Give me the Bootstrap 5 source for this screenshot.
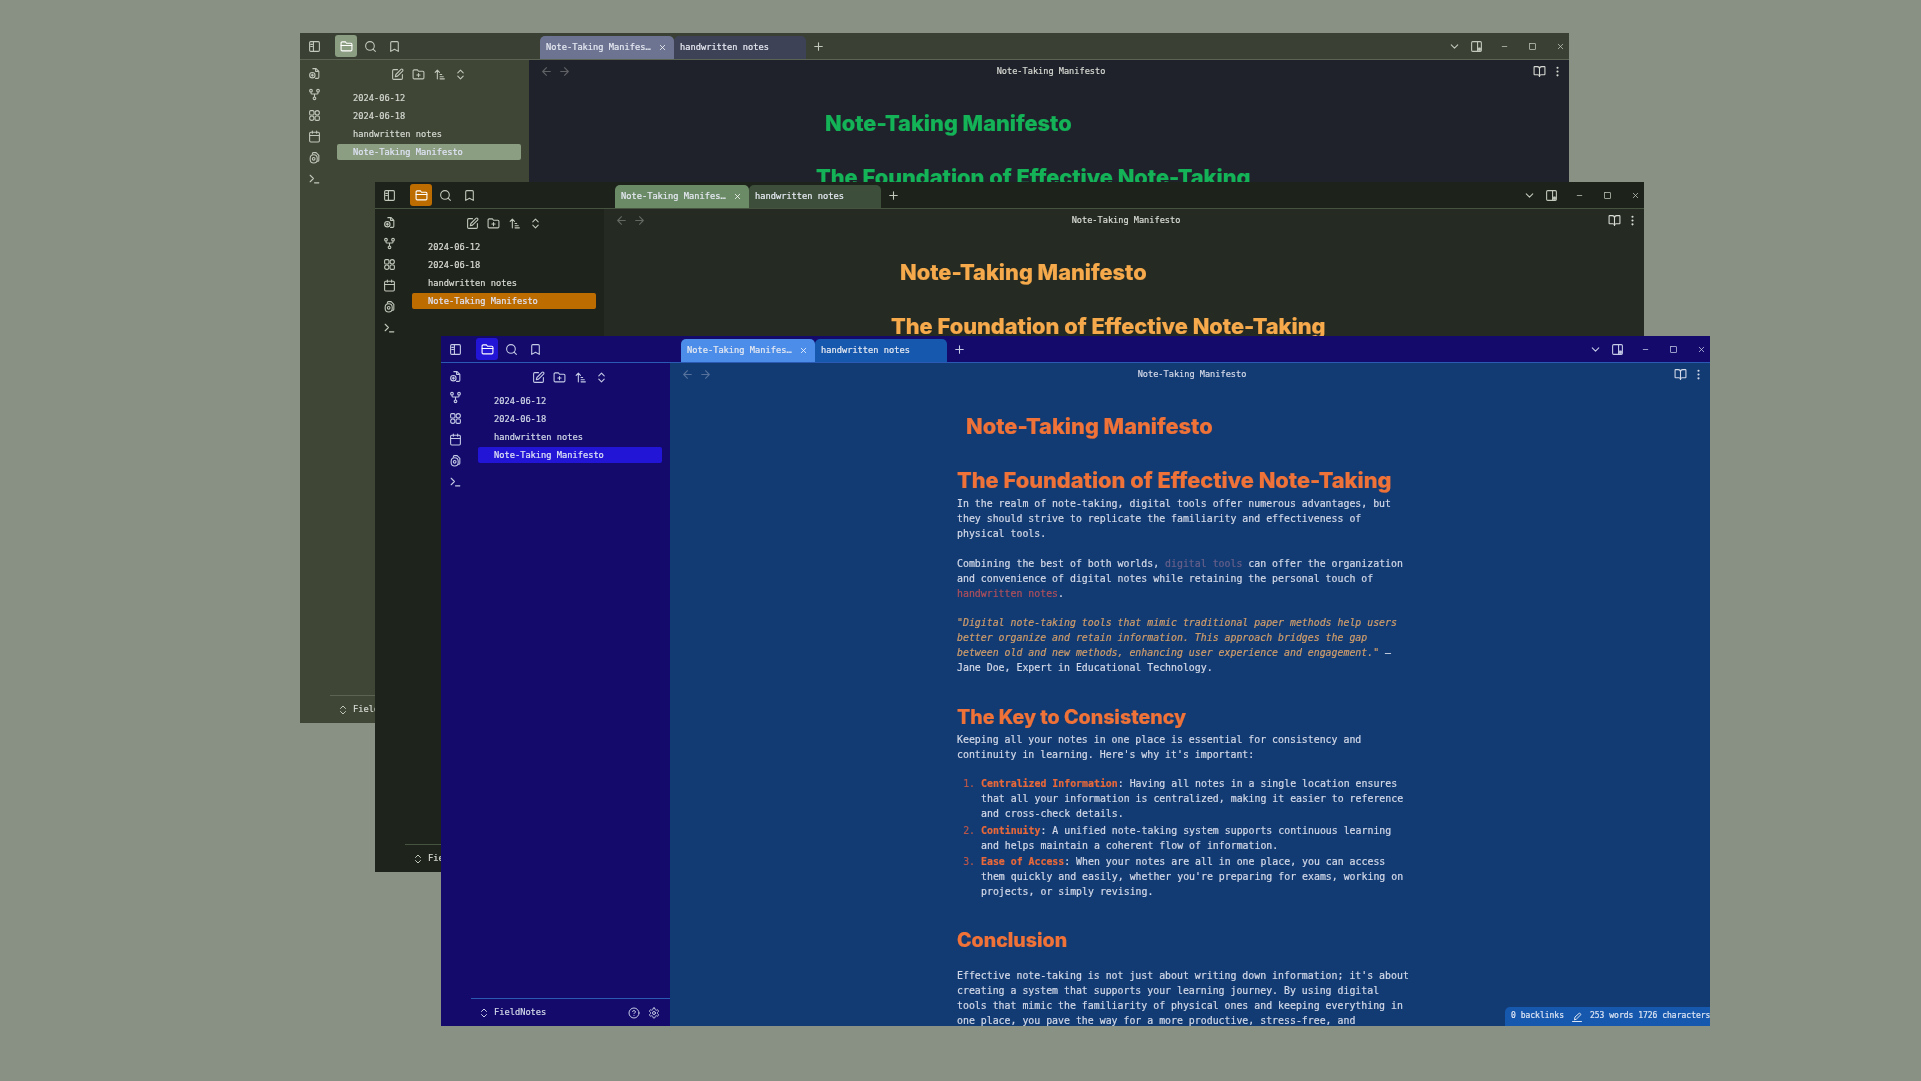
<!DOCTYPE html>
<html lang="en">
<head>
    <meta charset="UTF-8">
    <meta name="viewport" content="width=device-width, initial-scale=1.0">
    <title>Note-Taking Manifesto</title>
    <link href="https://cdn.jsdelivr.net/npm/bootstrap@5.3.0/dist/css/bootstrap.min.css" rel="stylesheet">
    <style>
        html, body { height: 100%; }
        body { background: #899084; overflow: hidden; }
        .desk { position: relative; width: 1921px; height: 1081px; background: #899084; filter: blur(.75px); }
        .app-win { position: absolute; width: 1269px; height: 690px; color: var(--ink); font: 9.9px/14.9px "DejaVu Sans Mono", "Liberation Mono", monospace; -webkit-text-stroke: .2px; overflow: hidden; }
        .win-a { left: 300px; top: 33px; }
        .win-b { left: 375px; top: 182px; }
        .win-c { left: 441px; top: 336px; }
        .th-moss { --bar: #3a4033; --side: #3f4636; --pane: #20222b; --line: #5b6352; --tab: #6c7491; --tab2: #3e4256; --pick: #8c9e82; --head: #14b358; --ink: #d6d9d2; --icon: #c3c8bc; }
        .th-forest { --bar: #1d221a; --side: #1e231b; --pane: #252b22; --line: #46533f; --tab: #6b8b67; --tab2: #3d4f3a; --pick: #bd6c00; --head: #f7aa4c; --ink: #d9dcd5; --icon: #c3c8bc; }
        .th-indigo { --bar: #130a6b; --side: #130a6b; --pane: #123a73; --line: #2a5ab4; --tab: #4b8de8; --tab2: #1558ad; --pick: #2315d6; --head: #ef7238; --ink: #d3d9e8; --icon: #c6cbe6; }

        .ico { width: 13px; height: 13px; fill: none; stroke: currentColor; stroke-width: 2; stroke-linecap: round; stroke-linejoin: round; flex: none; }
        .top-bar { height: 27px; background: var(--bar); border-bottom: 1px solid var(--line); color: var(--icon); }
        .top-left { width: 240px; padding-left: 3.5px; }
        .top-btn { width: 22px; height: 22px; border-radius: 3px; margin-right: 2px; }
        .top-btn.first { margin-right: 9.5px; }
        .top-btn.picked { background: var(--pick); color: #fff; }
        .file-tab { height: 23px; margin-top: 3px; padding: 0 6px; font-size: 8.7px; white-space: nowrap; border-radius: 5px 5px 0 0; color: #e6e9f2; }
        .file-tab.on { width: 134px; background: var(--tab); }
        .file-tab.off { width: 132px; background: var(--tab2); }
        .file-tab .ico { width: 9px; height: 9px; margin-left: auto; margin-right: 1px; color: #fff; }
        .add-tab { margin-left: 6px; }
        .win-tools { gap: 8px; margin-right: -1px; }
        .win-tool { width: 20px; }
        .win-tool .ico.thin { width: 9px; height: 9px; }
        .win-tool.narrow { margin-right: -6px; }

        .rib { width: 30px; padding-top: 7px; padding-right: .5px; gap: 8px; background: var(--side); color: var(--icon); }
        .side { width: 199px; background: var(--side); }
        .side-tools { height: 28.5px; gap: 8px; padding-right: 2px; color: var(--icon); }
        .tree-row { height: 18px; margin: 0 8px 0 7px; padding-left: 16px; line-height: 18px; font-size: 8.7px; white-space: nowrap; }
        .tree-row.picked { background: var(--pick); height: 16px; margin-top: 1px; margin-bottom: 1px; line-height: 16px; border-radius: 2px; color: #dfe3f5; }
        .side-foot { height: 28px; border-top: 1px solid var(--line); padding: 0 10px 0 7px; color: var(--icon); font-size: 8.7px; }
        .side-foot .name { margin-left: 4px; color: var(--ink); }
        .side-foot .ico.small { width: 12px; height: 12px; }

        .pane { background: var(--pane); min-width: 0; }
        .pane-head { height: 23px; padding: 0 5px 0 11px; color: var(--ink); font-size: 8.6px; }
        .pane-head .dim { gap: 5px; opacity: .35; }
        .pane-head .right-set { gap: 5px; }
        .pane-title { left: 0; right: 0; padding-left: 4px; text-align: center; }
        .note { width: 466px; margin: 0 auto; padding: 25px 10px 0 0; }
        .note h1, .note h2 { color: var(--head); font-family: Inter, "Open Sans", sans-serif; font-weight: 800; margin: 0; white-space: nowrap; }
        .note h1 { font-size: 21.8px; line-height: 30px; margin: 0 0 25px 9px; }
        .note h2 { font-size: 21.8px; line-height: 28px; margin: 0 0 3.2px; }
        .note h2.sub { font-size: 19.6px; margin-top: 26.8px; margin-bottom: 2px; }
        .note p { margin: 0 0 14.8px; }
        .note ol { padding-left: 24px; margin: 0; }
        .note li { margin-bottom: 1.7px; }
        .note li::marker { color: #b8574a; }
        .note b { color: #e9693a; }
        .link-dim { color: #67608a; }
        .link-red { color: #b0505c; }
        .quote-txt { color: #cf9d6b; font-style: italic; }
        .note h2.last { margin-top: 26.5px; margin-bottom: 15px; }

        .status-chip { position: absolute; right: 0; bottom: 0; width: 205px; height: 19px; padding-left: 6px; gap: 7px; background: var(--tab2); border-radius: 5px 0 0 0; font-size: 8px; white-space: nowrap; overflow: hidden; color: #dde4f3; }
        .status-chip .ico { width: 12px; height: 12px; }
    </style>
</head>
<body>
    <svg width="0" height="0" class="position-absolute">
        <symbol id="i-panel" viewBox="0 0 24 24"><rect x="3" y="3" width="18" height="18" rx="2"/><path d="M10 3v18M5 8h3M5 12h3"/></symbol>
        <symbol id="i-panel-r" viewBox="0 0 24 24"><rect x="3" y="3" width="18" height="18" rx="2"/><path d="M14 3v18"/><path d="M16 15h3v4h-3z" fill="currentColor"/></symbol>
        <symbol id="i-folder" viewBox="0 0 24 24"><path d="M4 20h16a2 2 0 0 0 2-2V8a2 2 0 0 0-2-2h-8L10 3.5H4a2 2 0 0 0-2 2V18a2 2 0 0 0 2 2z"/><path d="M2 10h20"/></symbol>
        <symbol id="i-search" viewBox="0 0 24 24"><circle cx="11" cy="11" r="8"/><path d="m21 21-4.3-4.3"/></symbol>
        <symbol id="i-mark" viewBox="0 0 24 24"><path d="m19 21-7-4-7 4V5a2 2 0 0 1 2-2h10a2 2 0 0 1 2 2z"/></symbol>
        <symbol id="i-file" viewBox="0 0 24 24"><path d="M9 3h6l5 5v11a2 2 0 0 1-2 2h-4"/><path d="M14 3v5h5"/><circle cx="8" cy="15" r="5"/><path d="M8 13v4M6 15h4"/></symbol>
        <symbol id="i-fork" viewBox="0 0 24 24"><circle cx="12" cy="19" r="2.5"/><circle cx="5.500" cy="5" r="2.5"/><circle cx="18.500" cy="5" r="2.5"/><path d="M18.500 8v1a2 2 0 0 1-2 2h-9a2 2 0 0 1-2-2V8M12 11v5"/></symbol>
        <symbol id="i-grid" viewBox="0 0 24 24"><rect x="3" y="3" width="8" height="8" rx="2"/><rect x="13" y="3" width="8" height="8" rx="4"/><circle cx="7" cy="17" r="4"/><rect x="13" y="13" width="8" height="8" rx="2"/></symbol>
        <symbol id="i-cal" viewBox="0 0 24 24"><rect x="3" y="4" width="18" height="18" rx="2"/><path d="M16 2v4M8 2v4M3 10h18"/></symbol>
        <symbol id="i-copy" viewBox="0 0 24 24"><path d="M8 6V5a2 2 0 0 1 2-2h5l5 5v9a2 2 0 0 1-2 2h-1"/><rect x="4" y="7" width="13" height="15" rx="6.500"/><circle cx="10.500" cy="14.500" r="2.500"/></symbol>
        <symbol id="i-term" viewBox="0 0 24 24"><path d="m4 6 6 6-6 6M12 20h8"/></symbol>
        <symbol id="i-pen" viewBox="0 0 24 24"><path d="M12 3H5a2 2 0 0 0-2 2v14a2 2 0 0 0 2 2h14a2 2 0 0 0 2-2v-7"/><path d="M18.400 2.600a2.100 2.100 0 1 1 3 3L12 15l-4 1 1-4z"/></symbol>
        <symbol id="i-newdir" viewBox="0 0 24 24"><path d="M4 20h16a2 2 0 0 0 2-2V8a2 2 0 0 0-2-2h-8L10 3.500H4a2 2 0 0 0-2 2V18a2 2 0 0 0 2 2z"/><path d="M12 10v6M9 13h6"/></symbol>
        <symbol id="i-sort" viewBox="0 0 24 24"><path d="m4 8 4-4 4 4M8 4v16M13 20h8M13 16h6M13 12h3"/></symbol>
        <symbol id="i-updown" viewBox="0 0 24 24"><path d="m7 15 5 5 5-5M7 9l5-5 5 5"/></symbol>
        <symbol id="i-down" viewBox="0 0 24 24"><path d="m6 9 6 6 6-6"/></symbol>
        <symbol id="i-min" viewBox="0 0 24 24"><path d="M6 12h12"/></symbol>
        <symbol id="i-max" viewBox="0 0 24 24"><rect x="4" y="4" width="16" height="16" rx="1"/></symbol>
        <symbol id="i-x" viewBox="0 0 24 24"><path d="M18 6 6 18M6 6l12 12"/></symbol>
        <symbol id="i-plus" viewBox="0 0 24 24"><path d="M5 12h14M12 5v14"/></symbol>
        <symbol id="i-back" viewBox="0 0 24 24"><path d="m12 19-7-7 7-7M19 12H5"/></symbol>
        <symbol id="i-next" viewBox="0 0 24 24"><path d="m12 5 7 7-7 7M5 12h14"/></symbol>
        <symbol id="i-book" viewBox="0 0 24 24"><path d="M12 7v14"/><path d="M3 18a1 1 0 0 1-1-1V4a1 1 0 0 1 1-1h5a4 4 0 0 1 4 4 4 4 0 0 1 4-4h5a1 1 0 0 1 1 1v13a1 1 0 0 1-1 1h-6a3 3 0 0 0-3 3 3 3 0 0 0-3-3z"/></symbol>
        <symbol id="i-dots" viewBox="0 0 24 24"><circle cx="12" cy="5" r="1"/><circle cx="12" cy="12" r="1"/><circle cx="12" cy="19" r="1"/></symbol>
        <symbol id="i-help" viewBox="0 0 24 24"><circle cx="12" cy="12" r="10"/><path d="M9.100 9a3 3 0 0 1 5.800 1c0 2-3 3-3 3M12 17h.01"/></symbol>
        <symbol id="i-gear" viewBox="0 0 24 24"><path d="M12.220 2h-.44a2 2 0 0 0-2 2v.18a2 2 0 0 1-1 1.730l-.43.250a2 2 0 0 1-2 0l-.15-.08a2 2 0 0 0-2.730.730l-.22.380a2 2 0 0 0 .730 2.730l.15.100a2 2 0 0 1 1 1.720v.510a2 2 0 0 1-1 1.740l-.15.090a2 2 0 0 0-.730 2.730l.22.380a2 2 0 0 0 2.730.730l.15-.08a2 2 0 0 1 2 0l.43.250a2 2 0 0 1 1 1.730V20a2 2 0 0 0 2 2h.44a2 2 0 0 0 2-2v-.18a2 2 0 0 1 1-1.730l.43-.25a2 2 0 0 1 2 0l.15.080a2 2 0 0 0 2.730-.73l.22-.39a2 2 0 0 0-.73-2.730l-.15-.08a2 2 0 0 1-1-1.740v-.5a2 2 0 0 1 1-1.740l.15-.09a2 2 0 0 0 .73-2.730l-.22-.38a2 2 0 0 0-2.730-.73l-.15.080a2 2 0 0 1-2 0l-.43-.25a2 2 0 0 1-1-1.730V4a2 2 0 0 0-2-2z"/><circle cx="12" cy="12" r="3"/></symbol>
        <symbol id="i-quill" viewBox="0 0 24 24"><path d="M3 21h18M7 17l1-5L17 4l3 3-9 9z"/></symbol>
    </svg>

    <div class="desk">

        <!-- back window: green on moss -->
        <div class="app-win win-a th-moss d-flex flex-column">
            <div class="top-bar d-flex align-items-center flex-shrink-0">
                <div class="top-left d-flex align-items-center">
                    <span class="top-btn first d-flex align-items-center justify-content-center"><svg class="ico"><use href="#i-panel"/></svg></span>
                    <span class="top-btn picked d-flex align-items-center justify-content-center"><svg class="ico"><use href="#i-folder"/></svg></span>
                    <span class="top-btn d-flex align-items-center justify-content-center"><svg class="ico"><use href="#i-search"/></svg></span>
                    <span class="top-btn d-flex align-items-center justify-content-center"><svg class="ico"><use href="#i-mark"/></svg></span>
                </div>
                <div class="file-tab on d-flex align-items-center">Note-Taking Manifes… <svg class="ico"><use href="#i-x"/></svg></div>
                <div class="file-tab off d-flex align-items-center">handwritten notes</div>
                <svg class="ico add-tab"><use href="#i-plus"/></svg>
                <div class="win-tools d-flex align-items-center ms-auto">
                    <span class="win-tool narrow d-flex justify-content-center"><svg class="ico"><use href="#i-down"/></svg></span>
                    <span class="win-tool d-flex justify-content-center"><svg class="ico"><use href="#i-panel-r"/></svg></span>
                    <span class="win-tool d-flex justify-content-center"><svg class="ico thin"><use href="#i-min"/></svg></span>
                    <span class="win-tool d-flex justify-content-center"><svg class="ico thin"><use href="#i-max"/></svg></span>
                    <span class="win-tool d-flex justify-content-center"><svg class="ico thin"><use href="#i-x"/></svg></span>
                </div>
            </div>
            <div class="d-flex flex-grow-1 overflow-hidden">
                <div class="rib d-flex flex-column align-items-center flex-shrink-0">
                    <svg class="ico"><use href="#i-file"/></svg><svg class="ico"><use href="#i-fork"/></svg><svg class="ico"><use href="#i-grid"/></svg><svg class="ico"><use href="#i-cal"/></svg><svg class="ico"><use href="#i-copy"/></svg><svg class="ico"><use href="#i-term"/></svg>
                </div>
                <div class="side d-flex flex-column flex-shrink-0">
                    <div class="side-tools d-flex align-items-center justify-content-center">
                        <svg class="ico"><use href="#i-pen"/></svg><svg class="ico"><use href="#i-newdir"/></svg><svg class="ico"><use href="#i-sort"/></svg><svg class="ico"><use href="#i-updown"/></svg>
                    </div>
                    <div class="tree-row">2024-06-12</div>
                    <div class="tree-row">2024-06-18</div>
                    <div class="tree-row">handwritten notes</div>
                    <div class="tree-row picked">Note-Taking Manifesto</div>
                    <div class="side-foot d-flex align-items-center mt-auto">
                        <svg class="ico small"><use href="#i-updown"/></svg><span class="name">FieldNotes</span>
                    </div>
                </div>
                <div class="pane flex-grow-1 d-flex flex-column overflow-hidden">
                    <div class="pane-head position-relative d-flex align-items-center flex-shrink-0">
                        <span class="dim d-flex"><svg class="ico"><use href="#i-back"/></svg><svg class="ico"><use href="#i-next"/></svg></span>
                        <span class="pane-title position-absolute">Note-Taking Manifesto</span>
                        <span class="right-set ms-auto d-flex"><svg class="ico"><use href="#i-book"/></svg><svg class="ico"><use href="#i-dots"/></svg></span>
                    </div>
                    <div class="note">
                        <h1>Note-Taking Manifesto</h1>
                        <h2>The Foundation of Effective Note-Taking</h2>
                    </div>
                </div>
            </div>
        </div>

        <!-- middle window: orange on forest -->
        <div class="app-win win-b th-forest d-flex flex-column">
            <div class="top-bar d-flex align-items-center flex-shrink-0">
                <div class="top-left d-flex align-items-center">
                    <span class="top-btn first d-flex align-items-center justify-content-center"><svg class="ico"><use href="#i-panel"/></svg></span>
                    <span class="top-btn picked d-flex align-items-center justify-content-center"><svg class="ico"><use href="#i-folder"/></svg></span>
                    <span class="top-btn d-flex align-items-center justify-content-center"><svg class="ico"><use href="#i-search"/></svg></span>
                    <span class="top-btn d-flex align-items-center justify-content-center"><svg class="ico"><use href="#i-mark"/></svg></span>
                </div>
                <div class="file-tab on d-flex align-items-center">Note-Taking Manifes… <svg class="ico"><use href="#i-x"/></svg></div>
                <div class="file-tab off d-flex align-items-center">handwritten notes</div>
                <svg class="ico add-tab"><use href="#i-plus"/></svg>
                <div class="win-tools d-flex align-items-center ms-auto">
                    <span class="win-tool narrow d-flex justify-content-center"><svg class="ico"><use href="#i-down"/></svg></span>
                    <span class="win-tool d-flex justify-content-center"><svg class="ico"><use href="#i-panel-r"/></svg></span>
                    <span class="win-tool d-flex justify-content-center"><svg class="ico thin"><use href="#i-min"/></svg></span>
                    <span class="win-tool d-flex justify-content-center"><svg class="ico thin"><use href="#i-max"/></svg></span>
                    <span class="win-tool d-flex justify-content-center"><svg class="ico thin"><use href="#i-x"/></svg></span>
                </div>
            </div>
            <div class="d-flex flex-grow-1 overflow-hidden">
                <div class="rib d-flex flex-column align-items-center flex-shrink-0">
                    <svg class="ico"><use href="#i-file"/></svg><svg class="ico"><use href="#i-fork"/></svg><svg class="ico"><use href="#i-grid"/></svg><svg class="ico"><use href="#i-cal"/></svg><svg class="ico"><use href="#i-copy"/></svg><svg class="ico"><use href="#i-term"/></svg>
                </div>
                <div class="side d-flex flex-column flex-shrink-0">
                    <div class="side-tools d-flex align-items-center justify-content-center">
                        <svg class="ico"><use href="#i-pen"/></svg><svg class="ico"><use href="#i-newdir"/></svg><svg class="ico"><use href="#i-sort"/></svg><svg class="ico"><use href="#i-updown"/></svg>
                    </div>
                    <div class="tree-row">2024-06-12</div>
                    <div class="tree-row">2024-06-18</div>
                    <div class="tree-row">handwritten notes</div>
                    <div class="tree-row picked">Note-Taking Manifesto</div>
                    <div class="side-foot d-flex align-items-center mt-auto">
                        <svg class="ico small"><use href="#i-updown"/></svg><span class="name">FieldNotes</span>
                    </div>
                </div>
                <div class="pane flex-grow-1 d-flex flex-column overflow-hidden">
                    <div class="pane-head position-relative d-flex align-items-center flex-shrink-0">
                        <span class="dim d-flex"><svg class="ico"><use href="#i-back"/></svg><svg class="ico"><use href="#i-next"/></svg></span>
                        <span class="pane-title position-absolute">Note-Taking Manifesto</span>
                        <span class="right-set ms-auto d-flex"><svg class="ico"><use href="#i-book"/></svg><svg class="ico"><use href="#i-dots"/></svg></span>
                    </div>
                    <div class="note">
                        <h1>Note-Taking Manifesto</h1>
                        <h2>The Foundation of Effective Note-Taking</h2>
                    </div>
                </div>
            </div>
        </div>

        <!-- front window: orange on indigo -->
        <div class="app-win win-c th-indigo d-flex flex-column">
            <div class="top-bar d-flex align-items-center flex-shrink-0">
                <div class="top-left d-flex align-items-center">
                    <span class="top-btn first d-flex align-items-center justify-content-center"><svg class="ico"><use href="#i-panel"/></svg></span>
                    <span class="top-btn picked d-flex align-items-center justify-content-center"><svg class="ico"><use href="#i-folder"/></svg></span>
                    <span class="top-btn d-flex align-items-center justify-content-center"><svg class="ico"><use href="#i-search"/></svg></span>
                    <span class="top-btn d-flex align-items-center justify-content-center"><svg class="ico"><use href="#i-mark"/></svg></span>
                </div>
                <div class="file-tab on d-flex align-items-center">Note-Taking Manifes… <svg class="ico"><use href="#i-x"/></svg></div>
                <div class="file-tab off d-flex align-items-center">handwritten notes</div>
                <svg class="ico add-tab"><use href="#i-plus"/></svg>
                <div class="win-tools d-flex align-items-center ms-auto">
                    <span class="win-tool narrow d-flex justify-content-center"><svg class="ico"><use href="#i-down"/></svg></span>
                    <span class="win-tool d-flex justify-content-center"><svg class="ico"><use href="#i-panel-r"/></svg></span>
                    <span class="win-tool d-flex justify-content-center"><svg class="ico thin"><use href="#i-min"/></svg></span>
                    <span class="win-tool d-flex justify-content-center"><svg class="ico thin"><use href="#i-max"/></svg></span>
                    <span class="win-tool d-flex justify-content-center"><svg class="ico thin"><use href="#i-x"/></svg></span>
                </div>
            </div>
            <div class="d-flex flex-grow-1 overflow-hidden">
                <div class="rib d-flex flex-column align-items-center flex-shrink-0">
                    <svg class="ico"><use href="#i-file"/></svg><svg class="ico"><use href="#i-fork"/></svg><svg class="ico"><use href="#i-grid"/></svg><svg class="ico"><use href="#i-cal"/></svg><svg class="ico"><use href="#i-copy"/></svg><svg class="ico"><use href="#i-term"/></svg>
                </div>
                <div class="side d-flex flex-column flex-shrink-0">
                    <div class="side-tools d-flex align-items-center justify-content-center">
                        <svg class="ico"><use href="#i-pen"/></svg><svg class="ico"><use href="#i-newdir"/></svg><svg class="ico"><use href="#i-sort"/></svg><svg class="ico"><use href="#i-updown"/></svg>
                    </div>
                    <div class="tree-row">2024-06-12</div>
                    <div class="tree-row">2024-06-18</div>
                    <div class="tree-row">handwritten notes</div>
                    <div class="tree-row picked">Note-Taking Manifesto</div>
                    <div class="side-foot d-flex align-items-center mt-auto">
                        <svg class="ico small"><use href="#i-updown"/></svg><span class="name">FieldNotes</span>
                        <span class="ms-auto d-flex gap-2"><svg class="ico small"><use href="#i-help"/></svg><svg class="ico small"><use href="#i-gear"/></svg></span>
                    </div>
                </div>
                <div class="pane flex-grow-1 d-flex flex-column overflow-hidden position-relative">
                    <div class="pane-head position-relative d-flex align-items-center flex-shrink-0">
                        <span class="dim d-flex"><svg class="ico"><use href="#i-back"/></svg><svg class="ico"><use href="#i-next"/></svg></span>
                        <span class="pane-title position-absolute">Note-Taking Manifesto</span>
                        <span class="right-set ms-auto d-flex"><svg class="ico"><use href="#i-book"/></svg><svg class="ico"><use href="#i-dots"/></svg></span>
                    </div>
                    <div class="note">
                        <h1>Note-Taking Manifesto</h1>
                        <h2>The Foundation of Effective Note-Taking</h2>
                        <p>In the realm of note-taking, digital tools offer numerous advantages, but they should strive to replicate the familiarity and effectiveness of physical tools.</p>
                        <p>Combining the best of both worlds, <span class="link-dim">digital tools</span> can offer the organization and convenience of digital notes while retaining the personal touch of <span class="link-red">handwritten notes</span>.</p>
                        <p><span class="quote-txt">"Digital note-taking tools that mimic traditional paper methods help users better organize and retain information. This approach bridges the gap between old and new methods, enhancing user experience and engagement."</span> — Jane Doe, Expert in Educational Technology.</p>
                        <h2 class="sub">The Key to Consistency</h2>
                        <p>Keeping all your notes in one place is essential for consistency and continuity in learning. Here's why it's important:</p>
                        <ol>
                            <li><b>Centralized Information</b>: Having all notes in a single location ensures that all your information is centralized, making it easier to reference and cross-check details.</li>
                            <li><b>Continuity</b>: A unified note-taking system supports continuous learning and helps maintain a coherent flow of information.</li>
                            <li><b>Ease of Access</b>: When your notes are all in one place, you can access them quickly and easily, whether you're preparing for exams, working on projects, or simply revising.</li>
                        </ol>
                        <h2 class="sub last">Conclusion</h2>
                        <p>Effective note-taking is not just about writing down information; it's about creating a system that supports your learning journey. By using digital tools that mimic the familiarity of physical ones and keeping everything in one place, you pave the way for a more productive, stress-free, and</p>
                    </div>
                    <div class="status-chip d-flex align-items-center">
                        <span>0 backlinks</span><svg class="ico"><use href="#i-quill"/></svg><span>253 words 1726 characters</span>
                    </div>
                </div>
            </div>
        </div>

    </div>
    <script src="https://cdn.jsdelivr.net/npm/bootstrap@5.3.0/dist/js/bootstrap.bundle.min.js"></script>
</body>
</html>
